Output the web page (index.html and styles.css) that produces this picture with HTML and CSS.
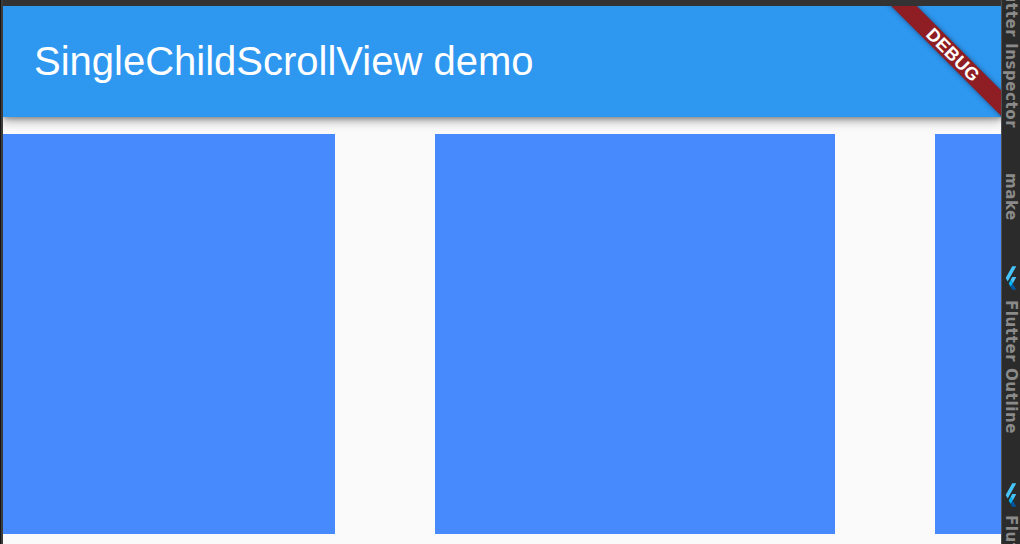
FILE: index.html
```html
<!DOCTYPE html>
<html>
<head>
<meta charset="utf-8">
<link rel="stylesheet" href="styles.css">
</head>
<body>
<div class="page">
  <div class="edge"></div>
  <div class="main">
    <div class="topstrip"></div>
    <div class="app">
      <header class="appbar">
        <h1 class="title">SingleChildScrollView demo</h1>
      </header>
      <div class="banner">DEBUG</div>
      <div class="content">
        <div class="row">
          <div class="box"></div>
          <div class="box"></div>
          <div class="box"></div>
        </div>
      </div>
    </div>
  </div>
  <aside class="side">
    <div class="slot slot-a"><span class="label">Flutter Inspector</span></div>
    <div class="slot slot-b"><span class="label">make</span></div>
    <div class="slot slot-c">
      <svg class="flogo" viewBox="0 0 166 202" preserveAspectRatio="none"><path fill="#47C5FB" d="M37.7 128.9L9.8 101 100.4 10.4h55.8zM156.2 94h-55.8l-20.9 20.9 27.9 27.9z"/><path fill="#00B5F8" d="M51.6 142.8l27.9-27.9 27.9 27.9-27.9 27.9z"/><path fill="#00569E" d="M79.5 170.7l20.9 20.9h55.8l-48.8-48.8z"/></svg>
    </div>
    <div class="slot slot-d"><span class="label">Flutter Outline</span></div>
    <div class="slot slot-e">
      <svg class="flogo" viewBox="0 0 166 202" preserveAspectRatio="none"><path fill="#47C5FB" d="M37.7 128.9L9.8 101 100.4 10.4h55.8zM156.2 94h-55.8l-20.9 20.9 27.9 27.9z"/><path fill="#00B5F8" d="M51.6 142.8l27.9-27.9 27.9 27.9-27.9 27.9z"/><path fill="#00569E" d="M79.5 170.7l20.9 20.9h55.8l-48.8-48.8z"/></svg>
    </div>
    <div class="slot slot-f"><span class="label">Flutter Performance</span></div>
  </aside>
</div>
</body>
</html>
```

FILE: styles.css
```css
* { box-sizing: border-box; }
html, body {
  margin: 0;
  padding: 0;
  width: 1020px;
  height: 544px;
  overflow: hidden;
  background: #2b2b2b;
}
.page {
  display: flex;
  width: 1020px;
  height: 544px;
}
.edge {
  flex: none;
  width: 3px;
  border-left: 1px solid #151515;
  background: #3c3c3c;
}
.main {
  flex: none;
  width: 998px;
  display: flex;
  flex-direction: column;
}
.topstrip {
  flex: none;
  height: 6px;
  background: #333333;
}
.app {
  position: relative;
  flex: 1;
  display: flex;
  flex-direction: column;
  overflow: hidden;
  background: #fafafa;
}
.appbar {
  position: relative;
  z-index: 1;
  flex: none;
  height: 111px;
  background: #2e97f0;
  display: flex;
  align-items: center;
  padding-left: 31px;
  box-shadow: 0 3px 4px -1px rgba(0,0,0,0.25), 0 5px 8px rgba(0,0,0,0.18), 0 2px 14px rgba(0,0,0,0.14);
}
.title {
  margin: 0;
  font-family: "Liberation Sans", Arial, sans-serif;
  font-weight: normal;
  font-size: 40px;
  line-height: 1;
  color: #ffffff;
  padding-bottom: 2px;
}
.banner {
  position: absolute;
  z-index: 2;
  left: 850px;
  top: 40px;
  width: 200px;
  height: 18px;
  transform: rotate(45deg);
  background: #8e1d24;
  box-shadow: 0 0 5px rgba(0,0,0,0.45);
  color: #ffffff;
  font-family: "Liberation Sans", Arial, sans-serif;
  font-weight: bold;
  font-size: 18px;
  line-height: 19px;
  letter-spacing: 0.4px;
  text-align: center;
}
.content {
  flex: 1;
  overflow: hidden;
  padding-top: 17px;
}
.row {
  display: flex;
  gap: 100px;
  margin-left: -68px;
}
.box {
  flex: none;
  width: 400px;
  height: 400px;
  background: #478afd;
}
.side {
  flex: 1;
  display: flex;
  flex-direction: column;
  align-items: center;
  overflow: hidden;
  border-left: 1px solid #505050;
  background: #2b2b2b;
}
.slot {
  flex: none;
  display: flex;
  justify-content: center;
  width: 18px;
}
.slot-a { margin-top: -25px; height: 198px; }
.slot-b { height: 90px; }
.slot-c { height: 37px; padding-top: 2px; }
.slot-d { height: 182px; }
.slot-e { height: 33px; padding-top: 0; }
.slot-f { height: 200px; }
.label {
  writing-mode: vertical-rl;
  font-family: "DejaVu Sans", sans-serif;
  font-size: 15px;
  font-weight: bold;
  letter-spacing: 0.6px;
  line-height: 18px;
  color: #8a8a8a;
  white-space: nowrap;
}
.flogo {
  display: block;
  width: 12px;
  height: 26px;
}
```
